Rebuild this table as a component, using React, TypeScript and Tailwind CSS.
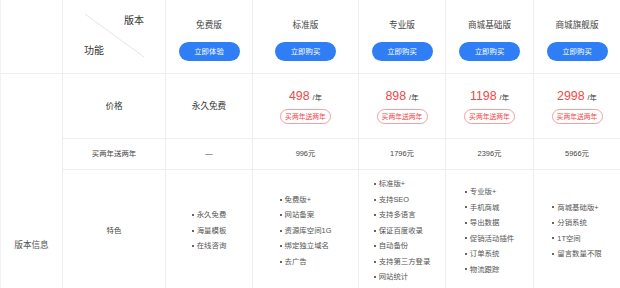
import React from 'react';

interface Plan {
  name: string;
  action: string;
  price?: string;
  twoYears: string;
  features: string[];
}

const plans: Plan[] = [
  { name: '免费版', action: '立即体验', twoYears: '—', features: ['永久免费', '海量模板', '在线咨询'] },
  { name: '标准版', action: '立即购买', price: '498', twoYears: '996元', features: ['免费版+', '网站备案', '资源库空间1G', '绑定独立域名', '去广告'] },
  { name: '专业版', action: '立即购买', price: '898', twoYears: '1796元', features: ['标准版+', '支持SEO', '支持多语言', '保证百度收录', '自动备份', '支持第三方登录', '网站统计'] },
  { name: '商城基础版', action: '立即购买', price: '1198', twoYears: '2396元', features: ['专业版+', '手机商城', '导出数据', '促销活动插件', '订单系统', '物流跟踪'] },
  { name: '商城旗舰版', action: '立即购买', price: '2998', twoYears: '5966元', features: ['商城基础版+', '分销系统', '1T空间', '留言数量不限'] },
];

const line = 'border-[#eeeeee]';

const App: React.FC = () => {
  return (
    <div
      className="w-[620px] h-[288px] overflow-hidden bg-white border-l border-[#f2f2f2]"
      style={{ fontFamily: '"Liberation Sans", "Noto Sans CJK SC", sans-serif' }}
    >
      <div className="grid grid-cols-[62px_103px_87px_106px_87px_88px_86px] grid-rows-[74px_65px_31px_122px_124px]">
        {/* header row */}
        <div className={`border-r border-b ${line}`} />
        <div className={`relative border-r border-b ${line}`}>
          <svg className="absolute left-0 top-0" width="103" height="73">
            <line x1="22" y1="14" x2="81" y2="57" stroke="#e6e6e6" strokeWidth="1" />
          </svg>
          <span className="absolute left-[61px] top-[14px] text-[10px] leading-[14px] text-[#333]">版本</span>
          <span className="absolute left-[21px] top-[44px] text-[10px] leading-[14px] text-[#333]">功能</span>
        </div>
        {plans.map((p, i) => (
          <div
            key={p.name}
            className={`flex flex-col items-center border-b ${line} ${i < plans.length - 1 ? 'border-r' : ''}`}
          >
            <div className="mt-[19px] text-[8.6px] leading-[12px] text-[#444]">{p.name}</div>
            <button className="mt-[11px] w-[61px] h-[19px] rounded-full bg-[#2f7ef6] text-white text-[7.4px] leading-[19px]">
              {p.action}
            </button>
          </div>
        ))}

        {/* left label spanning */}
        <div className={`row-span-4 flex items-center justify-center border-r ${line} text-[8.6px] text-[#555]`}>
          版本信息
        </div>

        {/* price row */}
        <div className={`flex items-center justify-center border-r border-b ${line} text-[8.6px] text-[#333]`}>价格</div>
        {plans.map((p, i) => (
          <div
            key={p.name}
            className={`flex flex-col items-center justify-center border-b ${line} ${i < plans.length - 1 ? 'border-r' : ''}`}
          >
            {p.price ? (
              <>
                <div className="flex items-baseline leading-[14px]">
                  <span className="text-[12.4px] text-[#f04848]">{p.price}</span>
                  <span className="ml-[3px] text-[7.4px] text-[#333]">/年</span>
                </div>
                <div className="mt-[4px] w-[51px] h-[15px] rounded-full border border-[#f4a0a0] text-[6.8px] leading-[13px] text-center text-[#f04848]">
                  买两年送两年
                </div>
              </>
            ) : (
              <span className="text-[8.6px] text-[#333]">永久免费</span>
            )}
          </div>
        ))}

        {/* two years row */}
        <div className={`flex items-center justify-center border-r border-b ${line} text-[7.4px] text-[#444]`}>买两年送两年</div>
        {plans.map((p, i) => (
          <div
            key={p.name}
            className={`flex items-center justify-center border-b ${line} ${i < plans.length - 1 ? 'border-r' : ''} text-[7.4px] text-[#444]`}
          >
            {p.twoYears}
          </div>
        ))}

        {/* features row */}
        <div className={`flex items-center justify-center border-r border-b ${line} text-[7.4px] text-[#444]`}>特色</div>
        {plans.map((p, i) => (
          <div
            key={p.name}
            className={`flex items-center justify-center border-b ${line} ${i < plans.length - 1 ? 'border-r' : ''}`}
          >
            <ul className="flex flex-col">
              {p.features.map((f) => (
                <li key={f} className="flex items-center h-[15.5px] text-[7.4px] text-[#555]">
                  <span className="w-[2px] h-[2px] bg-[#666] mr-[3px]" />
                  {f}
                </li>
              ))}
            </ul>
          </div>
        ))}

        {/* next row (cut off) */}
        <div className={`border-r ${line}`} />
        {plans.map((p, i) => (
          <div key={p.name} className={`${i < plans.length - 1 ? `border-r ${line}` : ''}`} />
        ))}
      </div>
    </div>
  );
};

export default App;
